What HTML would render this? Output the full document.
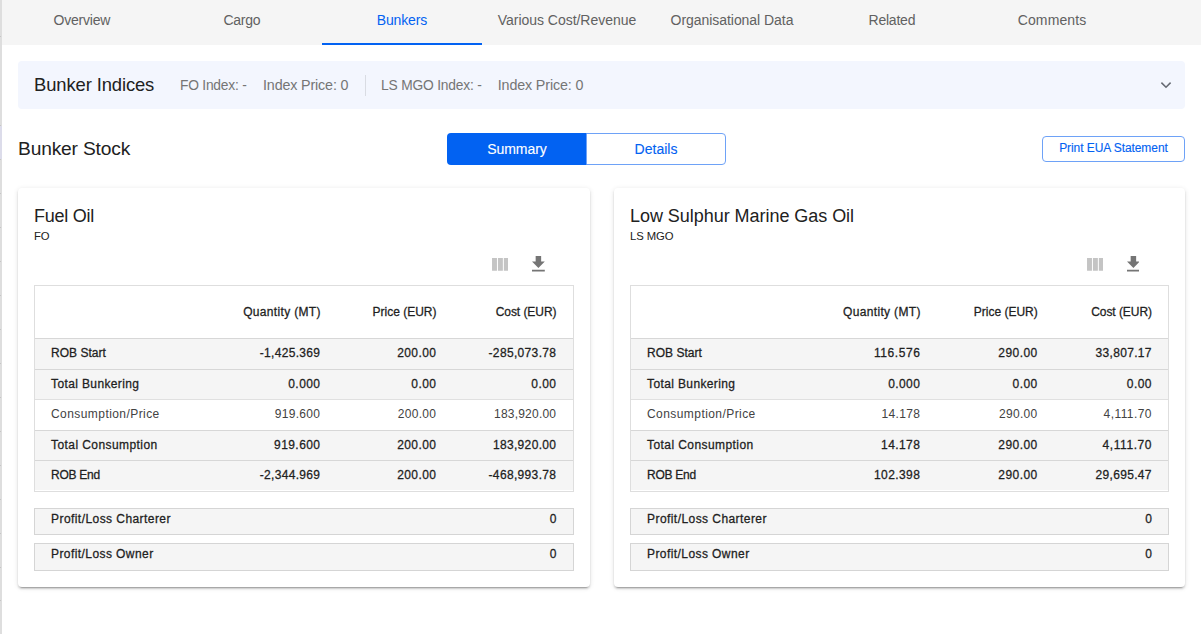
<!DOCTYPE html>
<html><head><meta charset="utf-8"><title>Bunkers</title>
<style>
html,body{margin:0;padding:0;}
body{width:1201px;height:634px;overflow:hidden;background:#fff;position:relative;font-family:"Liberation Sans",sans-serif;}
.t{position:absolute;white-space:nowrap;line-height:20px;height:20px;}
.abs,.tbl,.row,.box,.ic,.card{position:absolute;}
.strip{left:0;top:0;width:2px;height:634px;background:#dedede;}
.tabs{left:2px;top:0;width:1199px;height:45px;background:#f5f5f5;}
.ink{left:322px;top:43px;width:160px;height:2px;background:#0262f2;}
.panel{left:18px;top:61px;width:1167px;height:48px;background:#f3f6fe;border-radius:4px;}
.vdiv{left:365px;top:75px;width:1px;height:21px;background:#d9dce3;}
.card{top:188px;height:399px;background:#fff;border-radius:4px;box-shadow:0 3px 1px -2px rgba(0,0,0,.2),0 2px 2px 0 rgba(0,0,0,.14),0 1px 5px 0 rgba(0,0,0,.12);}
.tbl{border:1px solid rgba(0,0,0,.13);background:#fff;}
.row{border-top:1px solid rgba(0,0,0,.12);background:#fff;box-sizing:border-box;}
.row.g{background:#f5f5f5;}
.box{border:1px solid rgba(0,0,0,.13);background:#f5f5f5;}
.btn{box-sizing:border-box;border:1px solid #6ea2f7;}
</style></head><body>
<div class="abs strip"></div><div class="abs" style="left:0;top:126px;width:2px;height:33px;background:#dcdcea"></div><div class="abs" style="left:0;top:36px;width:1px;height:1px;background:#c6c6c6"></div><div class="abs" style="left:0;top:125px;width:1px;height:1px;background:#c6c6c6"></div><div class="abs" style="left:0;top:159px;width:1px;height:1px;background:#c6c6c6"></div><div class="abs" style="left:0;top:193px;width:1px;height:1px;background:#c6c6c6"></div><div class="abs" style="left:0;top:227px;width:1px;height:1px;background:#c6c6c6"></div><div class="abs" style="left:0;top:261px;width:1px;height:1px;background:#c6c6c6"></div><div class="abs" style="left:0;top:295px;width:1px;height:1px;background:#c6c6c6"></div><div class="abs" style="left:0;top:329px;width:1px;height:1px;background:#c6c6c6"></div><div class="abs" style="left:0;top:363px;width:1px;height:1px;background:#c6c6c6"></div><div class="abs" style="left:0;top:397px;width:1px;height:1px;background:#c6c6c6"></div><div class="abs" style="left:0;top:431px;width:1px;height:1px;background:#c6c6c6"></div><div class="abs" style="left:0;top:465px;width:1px;height:1px;background:#c6c6c6"></div><div class="abs" style="left:0;top:499px;width:1px;height:1px;background:#c6c6c6"></div><div class="abs" style="left:0;top:533px;width:1px;height:1px;background:#c6c6c6"></div><div class="abs" style="left:0;top:567px;width:1px;height:1px;background:#c6c6c6"></div><div class="abs" style="left:0;top:600px;width:1px;height:1px;background:#c6c6c6"></div>
<div class="abs tabs"></div>
<div class="abs ink"></div>
<div class="abs panel"></div>
<div class="abs vdiv"></div>
<svg class="ic" style="left:1160px;top:81px" width="12" height="8" viewBox="0 0 12 8"><path d="M1.4 1.6 L6 6.2 L10.6 1.6" fill="none" stroke="#666a73" stroke-width="1.55"/></svg>
<div class="abs" style="left:447px;top:133px;width:140px;height:32px;background:#0262f2;border-radius:4px 0 0 4px;"></div>
<div class="abs btn" style="left:586px;top:133px;width:140px;height:32px;border-radius:0 4px 4px 0;"></div>
<div class="abs btn" style="left:1042px;top:136px;width:143px;height:26px;border-radius:4px;"></div>
<div class="card" style="left:18px;width:572px;"></div>
<div class="card" style="left:614px;width:571px;"></div>
<div class="tbl" style="left:34px;top:285px;width:538px;height:205px"></div>
<div class="row g" style="left:35px;top:338px;width:538px;height:31px"></div>
<div class="row g" style="left:35px;top:369px;width:538px;height:30px"></div>
<div class="row " style="left:35px;top:399px;width:538px;height:31px"></div>
<div class="row g" style="left:35px;top:430px;width:538px;height:30px"></div>
<div class="row g" style="left:35px;top:460px;width:538px;height:30px"></div>
<div class="box" style="left:34px;top:508px;width:538px;height:25px"></div>
<div class="box" style="left:34px;top:543px;width:538px;height:26px"></div>
<div class="tbl" style="left:630px;top:285px;width:537px;height:205px"></div>
<div class="row g" style="left:631px;top:338px;width:537px;height:31px"></div>
<div class="row g" style="left:631px;top:369px;width:537px;height:30px"></div>
<div class="row " style="left:631px;top:399px;width:537px;height:31px"></div>
<div class="row g" style="left:631px;top:430px;width:537px;height:30px"></div>
<div class="row g" style="left:631px;top:460px;width:537px;height:30px"></div>
<div class="box" style="left:630px;top:508px;width:537px;height:25px"></div>
<div class="box" style="left:630px;top:543px;width:537px;height:26px"></div>
<svg class="ic" style="left:491.7px;top:257.9px" width="16.8" height="12.8" viewBox="4 5 17 13"><path fill="#c4c4c4" d="M10 18h5V5h-5v13zm-6 0h5V5H4v13zM16 5v13h5V5h-5z"/></svg>
<svg class="ic" style="left:531.9px;top:256px" width="12.8" height="15.6" viewBox="5 3 14 17"><path fill="#757575" d="M19 9h-4V3H9v6H5l7 7 7-7zM5 18v2h14v-2H5z"/></svg>
<svg class="ic" style="left:1086.5px;top:257.9px" width="16.8" height="12.8" viewBox="4 5 17 13"><path fill="#c4c4c4" d="M10 18h5V5h-5v13zm-6 0h5V5H4v13zM16 5v13h5V5h-5z"/></svg>
<svg class="ic" style="left:1126.7px;top:256px" width="12.8" height="15.6" viewBox="5 3 14 17"><path fill="#757575" d="M19 9h-4V3H9v6H5l7 7 7-7zM5 18v2h14v-2H5z"/></svg>
<span id="t0" class="t" style="top:10.00px;font-size:14px;color:#616161;letter-spacing:-0.230px;left:81.885px;transform:translateX(-50%);">Overview</span>
<span id="t1" class="t" style="top:10.00px;font-size:14px;color:#616161;letter-spacing:-0.238px;left:241.881px;transform:translateX(-50%);">Cargo</span>
<span id="t2" class="t" style="top:10.00px;font-size:14px;color:#0262f2;letter-spacing:-0.138px;left:401.931px;transform:translateX(-50%);">Bunkers</span>
<span id="t3" class="t" style="top:10.00px;font-size:14px;color:#616161;letter-spacing:-0.034px;left:566.983px;transform:translateX(-50%);">Various Cost/Revenue</span>
<span id="t4" class="t" style="top:10.00px;font-size:14px;color:#616161;letter-spacing:-0.048px;left:731.976px;transform:translateX(-50%);">Organisational Data</span>
<span id="t5" class="t" style="top:10.00px;font-size:14px;color:#616161;letter-spacing:-0.214px;left:891.893px;transform:translateX(-50%);">Related</span>
<span id="t6" class="t" style="top:10.00px;font-size:14px;color:#616161;letter-spacing:0.134px;left:1052.07px;transform:translateX(-50%);">Comments</span>
<span id="t7" class="t" style="top:74.50px;font-size:18.4px;color:#212121;letter-spacing:-0.103px;left:34px;">Bunker Indices</span>
<span id="t8" class="t" style="top:75.50px;font-size:13.8px;color:#757575;letter-spacing:-0.225px;left:180px;">FO Index: -</span>
<span id="t9" class="t" style="top:75.00px;font-size:14.3px;color:#757575;letter-spacing:-0.145px;left:263px;">Index Price: 0</span>
<span id="t10" class="t" style="top:75.50px;font-size:13.8px;color:#757575;letter-spacing:-0.192px;left:381px;">LS MGO Index: -</span>
<span id="t11" class="t" style="top:75.00px;font-size:14.3px;color:#757575;letter-spacing:-0.145px;left:497.8px;">Index Price: 0</span>
<span id="t12" class="t" style="top:138.50px;font-size:19.2px;color:#212121;letter-spacing:-0.166px;left:18px;">Bunker Stock</span>
<span id="t13" class="t" style="top:139.00px;font-size:14px;color:#ffffff;-webkit-text-stroke:0.12px #ffffff;letter-spacing:-0.034px;left:516.983px;transform:translateX(-50%);">Summary</span>
<span id="t14" class="t" style="top:139.00px;font-size:14px;color:#0262f2;-webkit-text-stroke:0.12px #0262f2;letter-spacing:0.008px;left:656.004px;transform:translateX(-50%);">Details</span>
<span id="t15" class="t" style="top:138.00px;font-size:12px;color:#0262f2;-webkit-text-stroke:0.12px #0262f2;letter-spacing:-0.077px;left:1113.46px;transform:translateX(-50%);">Print EUA Statement</span>
<span id="t16" class="t" style="top:206.00px;font-size:18px;color:#212121;letter-spacing:-0.250px;left:34px;">Fuel Oil</span>
<span id="t17" class="t" style="top:226.00px;font-size:11.3px;color:#212121;letter-spacing:-0.250px;left:34px;">FO</span>
<span id="t18" class="t" style="top:302.00px;font-size:12px;color:#212121;-webkit-text-stroke:0.26px #212121;letter-spacing:0.335px;right:880.165px;margin-right:0;">Quantity (MT)</span>
<span id="t19" class="t" style="top:302.00px;font-size:12px;color:#212121;-webkit-text-stroke:0.26px #212121;letter-spacing:-0.005px;right:764.505px;margin-right:0;">Price (EUR)</span>
<span id="t20" class="t" style="top:302.00px;font-size:12px;color:#212121;-webkit-text-stroke:0.26px #212121;letter-spacing:-0.054px;right:644.554px;margin-right:0;">Cost (EUR)</span>
<span id="t21" class="t" style="top:343.00px;font-size:12px;color:#212121;-webkit-text-stroke:0.26px #212121;letter-spacing:0.026px;left:51px;">ROB Start</span>
<span id="t22" class="t" style="top:343.00px;font-size:12px;color:#212121;-webkit-text-stroke:0.26px #212121;letter-spacing:0.330px;right:880.67px;margin-right:0;">-1,425.369</span>
<span id="t23" class="t" style="top:343.00px;font-size:12px;color:#212121;-webkit-text-stroke:0.26px #212121;letter-spacing:0.428px;right:764.572px;margin-right:0;">200.00</span>
<span id="t24" class="t" style="top:343.00px;font-size:12px;color:#212121;-webkit-text-stroke:0.26px #212121;letter-spacing:0.341px;right:644.659px;margin-right:0;">-285,073.78</span>
<span id="t25" class="t" style="top:374.00px;font-size:12px;color:#212121;-webkit-text-stroke:0.26px #212121;letter-spacing:0.378px;left:51px;">Total Bunkering</span>
<span id="t26" class="t" style="top:374.00px;font-size:12px;color:#212121;-webkit-text-stroke:0.26px #212121;letter-spacing:0.426px;right:880.574px;margin-right:0;">0.000</span>
<span id="t27" class="t" style="top:374.00px;font-size:12px;color:#212121;-webkit-text-stroke:0.26px #212121;letter-spacing:0.427px;right:764.573px;margin-right:0;">0.00</span>
<span id="t28" class="t" style="top:374.00px;font-size:12px;color:#212121;-webkit-text-stroke:0.26px #212121;letter-spacing:0.427px;right:644.573px;margin-right:0;">0.00</span>
<span id="t29" class="t" style="top:404.00px;font-size:12px;color:#424242;letter-spacing:0.432px;left:51px;">Consumption/Price</span>
<span id="t30" class="t" style="top:404.00px;font-size:12px;color:#424242;letter-spacing:0.321px;right:880.679px;margin-right:0;">919.600</span>
<span id="t31" class="t" style="top:404.00px;font-size:12px;color:#424242;letter-spacing:0.319px;right:764.681px;margin-right:0;">200.00</span>
<span id="t32" class="t" style="top:404.00px;font-size:12px;color:#424242;letter-spacing:0.215px;right:644.785px;margin-right:0;">183,920.00</span>
<span id="t33" class="t" style="top:435.00px;font-size:12px;color:#212121;-webkit-text-stroke:0.26px #212121;letter-spacing:0.426px;left:51px;">Total Consumption</span>
<span id="t34" class="t" style="top:435.00px;font-size:12px;color:#212121;-webkit-text-stroke:0.26px #212121;letter-spacing:0.425px;right:880.575px;margin-right:0;">919.600</span>
<span id="t35" class="t" style="top:435.00px;font-size:12px;color:#212121;-webkit-text-stroke:0.26px #212121;letter-spacing:0.428px;right:764.572px;margin-right:0;">200.00</span>
<span id="t36" class="t" style="top:435.00px;font-size:12px;color:#212121;-webkit-text-stroke:0.26px #212121;letter-spacing:0.339px;right:644.661px;margin-right:0;">183,920.00</span>
<span id="t37" class="t" style="top:465.00px;font-size:12px;color:#212121;-webkit-text-stroke:0.26px #212121;letter-spacing:-0.250px;left:51px;">ROB End</span>
<span id="t38" class="t" style="top:465.00px;font-size:12px;color:#212121;-webkit-text-stroke:0.26px #212121;letter-spacing:0.330px;right:880.67px;margin-right:0;">-2,344.969</span>
<span id="t39" class="t" style="top:465.00px;font-size:12px;color:#212121;-webkit-text-stroke:0.26px #212121;letter-spacing:0.428px;right:764.572px;margin-right:0;">200.00</span>
<span id="t40" class="t" style="top:465.00px;font-size:12px;color:#212121;-webkit-text-stroke:0.26px #212121;letter-spacing:0.341px;right:644.659px;margin-right:0;">-468,993.78</span>
<span id="t41" class="t" style="top:509.00px;font-size:12px;color:#212121;-webkit-text-stroke:0.26px #212121;letter-spacing:0.438px;left:51px;">Profit/Loss Charterer</span>
<span id="t42" class="t" style="top:509.00px;font-size:12px;color:#212121;-webkit-text-stroke:0.26px #212121;right:644.5px;">0</span>
<span id="t43" class="t" style="top:544.00px;font-size:12px;color:#212121;-webkit-text-stroke:0.26px #212121;letter-spacing:0.424px;left:51px;">Profit/Loss Owner</span>
<span id="t44" class="t" style="top:544.00px;font-size:12px;color:#212121;-webkit-text-stroke:0.26px #212121;right:644.5px;">0</span>
<span id="t45" class="t" style="top:206.00px;font-size:18px;color:#212121;letter-spacing:-0.041px;left:630px;">Low Sulphur Marine Gas Oil</span>
<span id="t46" class="t" style="top:226.00px;font-size:11.3px;color:#212121;letter-spacing:-0.094px;left:630px;">LS MGO</span>
<span id="t47" class="t" style="top:302.00px;font-size:12px;color:#212121;-webkit-text-stroke:0.26px #212121;letter-spacing:0.335px;right:280.265px;margin-right:0;">Quantity (MT)</span>
<span id="t48" class="t" style="top:302.00px;font-size:12px;color:#212121;-webkit-text-stroke:0.26px #212121;letter-spacing:-0.005px;right:163.305px;margin-right:0;">Price (EUR)</span>
<span id="t49" class="t" style="top:302.00px;font-size:12px;color:#212121;-webkit-text-stroke:0.26px #212121;letter-spacing:-0.054px;right:49.054px;margin-right:0;">Cost (EUR)</span>
<span id="t50" class="t" style="top:343.00px;font-size:12px;color:#212121;-webkit-text-stroke:0.26px #212121;letter-spacing:0.026px;left:647px;">ROB Start</span>
<span id="t51" class="t" style="top:343.00px;font-size:12px;color:#212121;-webkit-text-stroke:0.26px #212121;letter-spacing:0.573px;right:280.527px;margin-right:0;">116.576</span>
<span id="t52" class="t" style="top:343.00px;font-size:12px;color:#212121;-webkit-text-stroke:0.26px #212121;letter-spacing:0.428px;right:163.372px;margin-right:0;">290.00</span>
<span id="t53" class="t" style="top:343.00px;font-size:12px;color:#212121;-webkit-text-stroke:0.26px #212121;letter-spacing:0.326px;right:49.174px;margin-right:0;">33,807.17</span>
<span id="t54" class="t" style="top:374.00px;font-size:12px;color:#212121;-webkit-text-stroke:0.26px #212121;letter-spacing:0.378px;left:647px;">Total Bunkering</span>
<span id="t55" class="t" style="top:374.00px;font-size:12px;color:#212121;-webkit-text-stroke:0.26px #212121;letter-spacing:0.426px;right:280.674px;margin-right:0;">0.000</span>
<span id="t56" class="t" style="top:374.00px;font-size:12px;color:#212121;-webkit-text-stroke:0.26px #212121;letter-spacing:0.427px;right:163.373px;margin-right:0;">0.00</span>
<span id="t57" class="t" style="top:374.00px;font-size:12px;color:#212121;-webkit-text-stroke:0.26px #212121;letter-spacing:0.427px;right:49.073px;margin-right:0;">0.00</span>
<span id="t58" class="t" style="top:404.00px;font-size:12px;color:#424242;letter-spacing:0.432px;left:647px;">Consumption/Price</span>
<span id="t59" class="t" style="top:404.00px;font-size:12px;color:#424242;letter-spacing:0.319px;right:280.781px;margin-right:0;">14.178</span>
<span id="t60" class="t" style="top:404.00px;font-size:12px;color:#424242;letter-spacing:0.319px;right:163.481px;margin-right:0;">290.00</span>
<span id="t61" class="t" style="top:404.00px;font-size:12px;color:#424242;letter-spacing:0.431px;right:49.069px;margin-right:0;">4,111.70</span>
<span id="t62" class="t" style="top:435.00px;font-size:12px;color:#212121;-webkit-text-stroke:0.26px #212121;letter-spacing:0.426px;left:647px;">Total Consumption</span>
<span id="t63" class="t" style="top:435.00px;font-size:12px;color:#212121;-webkit-text-stroke:0.26px #212121;letter-spacing:0.428px;right:280.672px;margin-right:0;">14.178</span>
<span id="t64" class="t" style="top:435.00px;font-size:12px;color:#212121;-webkit-text-stroke:0.26px #212121;letter-spacing:0.428px;right:163.372px;margin-right:0;">290.00</span>
<span id="t65" class="t" style="top:435.00px;font-size:12px;color:#212121;-webkit-text-stroke:0.26px #212121;letter-spacing:0.567px;right:48.933px;margin-right:0;">4,111.70</span>
<span id="t66" class="t" style="top:465.00px;font-size:12px;color:#212121;-webkit-text-stroke:0.26px #212121;letter-spacing:-0.250px;left:647px;">ROB End</span>
<span id="t67" class="t" style="top:465.00px;font-size:12px;color:#212121;-webkit-text-stroke:0.26px #212121;letter-spacing:0.425px;right:280.675px;margin-right:0;">102.398</span>
<span id="t68" class="t" style="top:465.00px;font-size:12px;color:#212121;-webkit-text-stroke:0.26px #212121;letter-spacing:0.428px;right:163.372px;margin-right:0;">290.00</span>
<span id="t69" class="t" style="top:465.00px;font-size:12px;color:#212121;-webkit-text-stroke:0.26px #212121;letter-spacing:0.326px;right:49.174px;margin-right:0;">29,695.47</span>
<span id="t70" class="t" style="top:509.00px;font-size:12px;color:#212121;-webkit-text-stroke:0.26px #212121;letter-spacing:0.438px;left:647px;">Profit/Loss Charterer</span>
<span id="t71" class="t" style="top:509.00px;font-size:12px;color:#212121;-webkit-text-stroke:0.26px #212121;right:49px;">0</span>
<span id="t72" class="t" style="top:544.00px;font-size:12px;color:#212121;-webkit-text-stroke:0.26px #212121;letter-spacing:0.424px;left:647px;">Profit/Loss Owner</span>
<span id="t73" class="t" style="top:544.00px;font-size:12px;color:#212121;-webkit-text-stroke:0.26px #212121;right:49px;">0</span>
</body></html>
